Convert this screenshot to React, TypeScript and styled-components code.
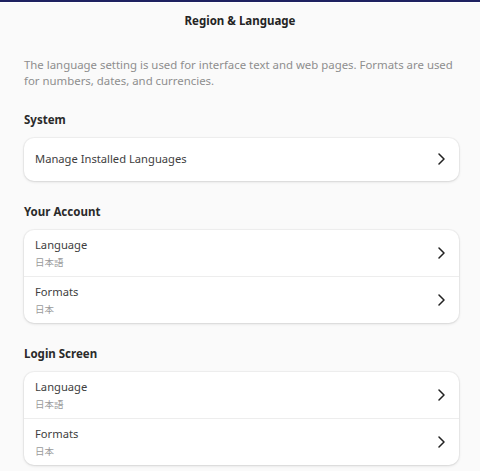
import React from "react";
import styled, { createGlobalStyle } from "styled-components";

const Global = createGlobalStyle`
  html, body { margin: 0; padding: 0; background: #fafafa; }
  body { font-family: "Noto Sans", "Noto Sans CJK JP", sans-serif; color: #2e2e2e; }
`;

const Window = styled.div`
  width: 480px;
  height: 471px;
  box-sizing: border-box;
  border-top: 2px solid #1e2160;
  background: #fafafa;
  overflow: hidden;
  display: flex;
  flex-direction: column;
`;

const HeaderBar = styled.header`
  flex-shrink: 0;
  height: 36px;
  display: flex;
  align-items: center;
  justify-content: center;
  border-top: 1px solid #ffffff;
  box-sizing: border-box;
`;

const Title = styled.h1`
  margin: 0;
  font-size: 11.5px;
  font-weight: 700;
  line-height: 18px;
  color: #242424;
`;

const Content = styled.main`
  flex-shrink: 0;
  padding: 19px 21px 0 24px;
  display: flex;
  flex-direction: column;
`;

const Description = styled.p`
  margin: 0 0 22px;
  font-size: 11.4px;
  line-height: 16px;
  color: #8e8e8e;
`;

const Section = styled.section`
  display: flex;
  flex-direction: column;
  gap: 9px;
  margin-bottom: 22px;
`;

const Heading = styled.h2`
  margin: 0;
  font-size: 11.5px;
  font-weight: 700;
  line-height: 18px;
  color: #2a2a2a;
`;

const Card = styled.div`
  background: #fff;
  border-radius: 10px;
  box-shadow: 0 0 0 1px rgba(0, 0, 0, 0.035), 0 1px 3px rgba(0, 0, 0, 0.12);
  display: flex;
  flex-direction: column;
  overflow: hidden;
`;

const Row = styled.div<{ $tall?: boolean }>`
  height: ${(p) => (p.$tall ? "46.5px" : "42.5px")};
  box-sizing: border-box;
  padding: 0 13px 0 11px;
  display: flex;
  align-items: center;
  justify-content: space-between;
  & + & {
    border-top: 1px solid #ededed;
  }
`;

const Labels = styled.div`
  display: flex;
  flex-direction: column;
`;

const RowTitle = styled.span`
  font-size: 11.2px;
  line-height: 18px;
  color: #404040;
`;

const RowSub = styled.span`
  font-family: "Noto Sans CJK JP", sans-serif;
  font-size: 9.5px;
  line-height: 14px;
  margin-top: 1px;
  color: #9a9a9a;
`;

const Chevron = () => (
  <svg width="10" height="12" viewBox="0 0 10 12" fill="none">
    <path d="M3 1 L8 6 L3 11" stroke="#222" strokeWidth="1.5" strokeLinecap="round" strokeLinejoin="round" />
  </svg>
);

type Item = { title: string; sub?: string };

const ListRow = ({ title, sub }: Item) => (
  <Row $tall={!!sub}>
    <Labels>
      <RowTitle>{title}</RowTitle>
      {sub && <RowSub>{sub}</RowSub>}
    </Labels>
    <Chevron />
  </Row>
);

const sections: { heading: string; items: Item[] }[] = [
  { heading: "System", items: [{ title: "Manage Installed Languages" }] },
  {
    heading: "Your Account",
    items: [
      { title: "Language", sub: "日本語" },
      { title: "Formats", sub: "日本" },
    ],
  },
  {
    heading: "Login Screen",
    items: [
      { title: "Language", sub: "日本語" },
      { title: "Formats", sub: "日本" },
    ],
  },
];

export default function App() {
  return (
    <>
      <Global />
      <Window>
        <HeaderBar>
          <Title>Region &amp; Language</Title>
        </HeaderBar>
        <Content>
          <Description>
            The language setting is used for interface text and web pages. Formats are used for numbers, dates, and currencies.
          </Description>
          {sections.map((s) => (
            <Section key={s.heading}>
              <Heading>{s.heading}</Heading>
              <Card>
                {s.items.map((it) => (
                  <ListRow key={it.title} {...it} />
                ))}
              </Card>
            </Section>
          ))}
        </Content>
      </Window>
    </>
  );
}
